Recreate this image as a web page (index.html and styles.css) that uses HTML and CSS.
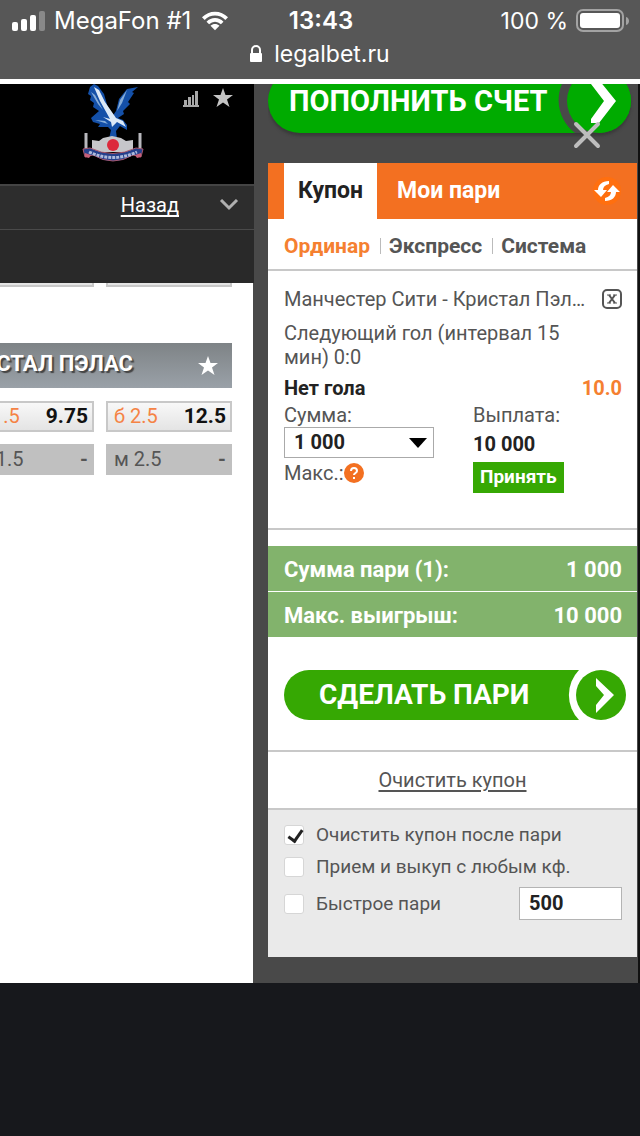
FILE: index.html
```
<!DOCTYPE html>
<html lang="ru">
  <head>
    <meta charset="utf-8" />
    <meta name="viewport" content="width=device-width, initial-scale=1.0" />
    <link rel="icon" href="data:," />
    <title>legalbet.ru</title>
    <link rel="stylesheet" href="styles.css">
  </head>
  <body>
    <header class="browser-bar">
      <div class="status">
        <div class="status-left">
          <svg class="signal" width="34" height="20" viewBox="0 0 34 20" fill="#fff">
            <rect x="0" y="11" width="6" height="9" rx="2" />
            <rect x="9" y="8" width="6" height="12" rx="2" />
            <rect x="18" y="4" width="6" height="16" rx="2" />
            <rect x="27" y="0" width="6" height="20" rx="2" opacity="0.3" />
          </svg>
          <span>MegaFon #1</span>
          <svg width="28" height="20" viewBox="0 0 30 20" fill="none" stroke="#fff" stroke-width="4">
            <path d="M2.500 7.500C9.500 0.300 20.500 0.300 27.500 7.500" />
            <path d="M7.300 12.200C11.700 7.800 18.300 7.800 22.700 12.200" />
            <path d="M15 20L10.200 15.200C13 12.600 17 12.600 19.800 15.200Z" fill="#fff" stroke="none" />
          </svg>
        </div>
        <span class="clock">13:43</span>
        <div class="status-right">
          <span>100 %</span>
          <svg width="54" height="24" viewBox="0 0 54 24">
            <rect x="1" y="1" width="46" height="21" rx="6" fill="none" stroke="#a3a3a3" stroke-width="2" />
            <rect x="4" y="4" width="40" height="15" rx="3" fill="#fff" />
            <path d="M50 8C54 9 54 15 50 16Z" fill="#a3a3a3" />
          </svg>
        </div>
      </div>
      <div class="address">
        <svg width="12" height="18" viewBox="0 0 12 18">
          <rect x="0" y="8" width="12" height="9" rx="1" fill="#fff" />
          <path d="M2 9V5A4 4 0 0 1 10 5V9" fill="none" stroke="#fff" stroke-width="2" />
        </svg>
        <span>legalbet.ru</span>
      </div>
    </header>

    <main class="page">
      <section class="match">
        <div class="team">
          <svg class="crest" width="64" height="80" viewBox="0 0 64 80">
            <path d="M13 0L9 3L7 10L10 12L9 16L13 19L12 23L18 27L10 34L12 38L19 40L17 43L27 43L30 46L28 55H36L35 47L39 42L46 46L46 41L42 36L37 34L43 30L42 27L49 20L47 18L53 9L51 8L57 3L46 5L38 15L35 27L31 33L27 24L23 10L17 2Z" fill="#1450a8" />
            <path d="M13 3L19 17L29 35L22 33L30 38L31 43L36 38L45 43L42 37L35 34L33 31L24 18L18 6Z" fill="#dce9f7" />
            <path d="M46 6L39 16L36 27L41 19ZM14 36L27 40L24 37ZM10 8L17 20L22 26L14 11Z" fill="#86add9" />
            <path d="M11 56L18 57L22 54L31 52L40 54L45 57L52 56V68H11Z" fill="#c6c6ca" />
            <path d="M5 49V67M59 49V67" stroke="#b8b8bd" stroke-width="3" />
            <circle cx="32" cy="61" r="6" fill="#dc293c" />
            <path d="M2 65L9 64Q32 75 55 64L62 65L60 73L52 71Q32 83 12 71L4 73Z" fill="#24408c" stroke="#a8586f" />
            <path d="M4 69L10 71L8 74L4 73ZM60 69L54 71L56 74L60 73Z" fill="#c65f78" />
            <path d="M8 68Q32 79 56 68" fill="none" stroke="#aebadb" stroke-width="3" stroke-dasharray="3 1" />
          </svg>
          <svg class="stats" width="16" height="16" viewBox="0 0 16 16" fill="#a8a8a8">
            <path d="M0 14H16V16H0ZM1 9H4V16H1ZM5 6H8V16H5ZM9 4H11V16H9ZM12 0H15V16H12Z" />
          </svg>
          <svg width="20" height="20" viewBox="0 0 20 20" fill="#c4c4c4">
            <path d="M10 0L12.500 7H20L14 11.500L16.500 19L10 14.500L3.500 19L6 11.500L0 7H7.500Z" />
          </svg>
        </div>
        <nav class="back-bar">
          <a href="#">Назад</a>
          <svg width="20" height="12" viewBox="0 0 20 12" fill="none" stroke="#b0b0b0" stroke-width="3">
            <path d="M2 1L10 9L18 1" />
          </svg>
        </nav>
        <div class="sub-bar"></div>

        <div class="market">
          <div class="odds odds-cut">
            <span></span>
            <span></span>
          </div>
          <div class="market-head">
            <h2>КРИСТАЛ ПЭЛАС</h2>
            <svg width="20" height="20" viewBox="0 0 20 20" fill="#fff">
              <path d="M10 0L12.500 7H20L14 11.500L16.500 19L10 14.500L3.500 19L6 11.500L0 7H7.500Z" />
            </svg>
          </div>
          <div class="odds">
            <button type="button">б 1.5 <b>9.75</b></button>
            <button type="button">б 2.5 <b>12.5</b></button>
          </div>
          <div class="odds">
            <button type="button" disabled>м 1.5 <b>-</b></button>
            <button type="button" disabled>м 2.5 <b>-</b></button>
          </div>
        </div>
      </section>

      <aside class="side">
        <div class="deposit-row">
          <button type="button" class="deposit">
            <span>ПОПОЛНИТЬ СЧЕТ</span>
            <svg width="76" height="64" viewBox="0 0 76 64">
              <path d="M18 0A41 41 0 0 0 20 64H44V0Z" fill="#494949" />
              <circle cx="44" cy="32" r="32" fill="#00ab00" />
              <path d="M36 11H44L61 32L44 54H36V50L49 32L36 15Z" fill="#fff" />
            </svg>
          </button>
          <button type="button" class="close" aria-label="Закрыть">
            <svg width="28" height="28" viewBox="0 0 28 28" stroke="#bdbdbd" stroke-width="4" stroke-linecap="round">
              <path d="M3 3L25 25M25 3L3 25" />
            </svg>
          </button>
        </div>

        <form class="coupon">
          <div class="tabs">
            <button type="button" class="tab active">Купон</button>
            <button type="button" class="tab">Мои пари</button>
            <button type="button" class="refresh" aria-label="Обновить">
              <svg width="30" height="30" viewBox="0 0 30 30">
                <circle cx="15" cy="15" r="14" fill="#ff6f0f" />
                <path d="M17 5C10 5 6 9 6 14H2L9 21L15 14H11C11 11 13 9 17 8ZM13 25C20 25 24 21 24 16H28L21 9L15 16H19C19 19 17 21 13 22Z" fill="#fff" />
              </svg>
            </button>
          </div>

          <div class="types">
            <button type="button" class="active">Ординар</button>
            <button type="button">Экспресс</button>
            <button type="button">Система</button>
          </div>

          <div class="bet">
            <div class="bet-title">
              <span class="event">Манчестер Сити - Кристал Пэлас</span>
              <button type="button" class="remove" aria-label="Удалить">
                <svg width="20" height="20" viewBox="0 0 20 20" fill="none" stroke="#555">
                  <rect x="1" y="1" width="18" height="18" rx="4" stroke-width="2" />
                  <path d="M7 6L13 14M13 6L7 14" stroke-width="2" />
                  <path d="M5 6H9M11 6H15M5 14H9M11 14H15" />
                </svg>
              </button>
            </div>
            <p class="bet-market">Следующий гол (интервал 15 мин) 0:0</p>
            <div class="bet-pick">
              <b>Нет гола</b>
              <b class="price">10.0</b>
            </div>
            <div class="bet-sums">
              <div class="stake">
                <label for="stake">Сумма:</label>
                <div class="select">
                  <select id="stake">
                    <option>1 000</option>
                  </select>
                  <svg width="18" height="10" viewBox="0 0 18 10"><path d="M0 0H18L9 10Z" /></svg>
                </div>
                <div class="max">
                  <span>Макс.:</span>
                  <svg width="20" height="20" viewBox="0 0 20 20">
                    <circle cx="10" cy="10" r="10" fill="#f37021" />
                    <path d="M7 8C7 4 13 4 13 8C13 10 10 10 10 12" fill="none" stroke="#fff" stroke-width="2" />
                    <rect x="9" y="14" width="2" height="2" fill="#fff" />
                  </svg>
                </div>
              </div>
              <div class="payout">
                <span>Выплата:</span>
                <b>10 000</b>
                <button type="button" class="accept">Принять</button>
              </div>
            </div>
          </div>

          <div class="totals">
            <div><span>Сумма пари (1):</span><span>1 000</span></div>
            <div><span>Макс. выигрыш:</span><span>10 000</span></div>
          </div>

          <div class="submit-row">
            <button type="button" class="submit">
              <span>СДЕЛАТЬ ПАРИ</span>
              <svg width="58" height="50" viewBox="0 0 58 50">
                <path d="M11 0A36 36 0 0 0 11 50H58V0Z" fill="#fff" />
                <circle cx="33" cy="25" r="25" fill="#36a803" />
                <path d="M28 8L46 25L28 43V35L36 25L28 16Z" fill="#fff" />
              </svg>
            </button>
          </div>

          <div class="clear"><a href="#">Очистить купон</a></div>

          <div class="options">
            <label><input type="checkbox" checked /> Очистить купон после пари</label>
            <label><input type="checkbox" /> Прием и выкуп с любым кф.</label>
            <div class="quick">
              <label><input type="checkbox" /> Быстрое пари</label>
              <input type="text" value="500" aria-label="Сумма быстрого пари" />
            </div>
          </div>
        </form>
      </aside>
    </main>
  </body>
</html>
```

FILE: styles.css
```
* {
  box-sizing: border-box;
}

body {
  margin: 0;
  min-height: 100vh;
  background: #17181c;
  color: #555;
  font-family: Roboto, "Liberation Sans", sans-serif;
  font-size: 20px;
  line-height: 24px;
}

button,
input,
select {
  margin: 0;
  padding: 0;
  border: 0;
  border-radius: 0;
  background: none;
  color: inherit;
  font: inherit;
}

svg {
  display: block;
  flex: none;
}

h2,
p {
  margin: 0;
}

/* browser chrome */
.browser-bar {
  height: 79px;
  padding-top: 9px;
  background: #575757;
  color: #fff;
  font-family: Inter, "Liberation Sans", sans-serif;
  font-size: 24px;
}

.status {
  display: grid;
  grid-template-columns: 1fr auto 1fr;
  padding: 0 10px 0 12px;
}

.status-left,
.status-right {
  display: flex;
  align-items: center;
  gap: 8px;
}

.status-left span {
  margin-right: 2px;
}

.status-right {
  justify-content: flex-end;
  font-size: 23px;
}

.clock {
  font-weight: 600;
}

.address {
  display: flex;
  justify-content: center;
  align-items: center;
  gap: 12px;
  margin-top: 9px;
  font-size: 23px;
}

/* page */
.page {
  display: grid;
  grid-template-columns: 254px minmax(0, 1fr);
  border-top: 5px solid #fff;
  background: #494949;
}

.match {
  display: flex;
  flex-direction: column;
  height: 899px;
  overflow: hidden;
}

.team {
  display: flex;
  align-items: flex-start;
  justify-content: flex-end;
  height: 102px;
  padding: 4px 21px 0 0;
  border-bottom: 2px solid #444;
  background: #000;
}

.crest {
  margin: -4px 38px 0 0;
}

.stats {
  margin: 3px 14px 0 0;
}

.back-bar {
  display: flex;
  align-items: center;
  justify-content: flex-end;
  gap: 40px;
  height: 44px;
  padding: 0 15px 5px 0;
  border-bottom: 1px solid #4a4a4a;
  background: #2d2d2d;
  color: #fff;
}

.back-bar a,
.clear a {
  color: inherit;
  text-underline-offset: 3px;
}

.sub-bar {
  height: 53px;
  background: #292929;
}

.market {
  flex: 1;
  margin-right: 1px;
  padding-right: 21px;
  background: #fff;
}

.odds {
  display: grid;
  grid-template-columns: 126px 126px;
  justify-content: end;
  gap: 12px;
  margin-bottom: 12px;
}

.odds button {
  display: flex;
  justify-content: space-between;
  align-items: center;
  height: 31px;
  padding: 0 4px 1px 6px;
  border: 2px solid #c8c8c8;
  background: linear-gradient(#f8f8f8, #e4e4e4);
  color: #f58345;
}

.odds b {
  color: #111;
  font-size: 21px;
}

.odds button:disabled {
  border-color: #c0c0c0;
  background: #c0c0c0;
  color: #555;
}

.odds button:disabled b {
  color: #555;
  font-size: 20px;
}

.odds-cut {
  height: 4px;
  margin-bottom: 56px;
}

.odds-cut span {
  border: 2px solid #c8c8c8;
  border-top: 0;
  background: #e4e4e4;
}

.market-head {
  display: flex;
  align-items: center;
  justify-content: flex-end;
  gap: 65px;
  height: 45px;
  margin-bottom: 13px;
  padding-right: 14px;
  background: linear-gradient(#7e8386, #9aa1a8);
  color: #fff;
}

.market-head h2 {
  padding-bottom: 4px;
  font-size: 22px;
  white-space: nowrap;
  text-shadow: 2px 2px 1px #444;
}

/* coupon column */
.side {
  padding-left: 14px;
  border-right: 2px solid #111;
}

.deposit-row {
  position: relative;
  display: flex;
  align-items: flex-end;
  height: 79px;
  padding: 0 7px 30px 0;
  overflow: hidden;
}

.deposit {
  display: flex;
  flex: 1;
  align-items: center;
  justify-content: space-between;
  height: 64px;
  padding-left: 21px;
  border-radius: 32px;
  background: #00ab00;
  box-shadow: 0 3px 3px #3a3a3a;
  color: #fff;
  font-size: 29px;
  font-weight: bold;
  white-space: nowrap;
}

.close {
  position: absolute;
  right: 37px;
  bottom: 14px;
}

.coupon {
  margin-right: 1px;
  background: #fff;
}

.tabs {
  display: flex;
  height: 56px;
  padding: 0 15px 0 16px;
  background: #f37021;
  color: #fff;
  font-size: 23px;
}

.tab {
  padding: 0 20px;
  font-weight: bold;
}

.tab.active {
  padding: 0 14px;
  background: #fff;
  color: #222;
}

.refresh {
  margin-left: auto;
}

.types {
  display: flex;
  align-items: center;
  height: 52px;
  padding: 4px 16px 0;
  border-bottom: 2px solid #c8c8c8;
}

.types button {
  font-size: 21px;
  font-weight: bold;
  line-height: 16px;
}

.types button + button {
  margin-left: 10px;
  padding-left: 8px;
  border-left: 1px solid #bbb;
}

.types button.active {
  color: #f58030;
}

.bet {
  height: 259px;
  padding: 16px 15px 0 16px;
  border-bottom: 2px solid #c8c8c8;
}

.bet-title {
  display: flex;
  align-items: center;
  gap: 12px;
  margin-bottom: 10px;
}

.event {
  flex: 1;
  overflow: hidden;
  text-overflow: ellipsis;
  white-space: nowrap;
}

.bet-market {
  padding-right: 40px;
}

.bet-pick {
  display: flex;
  justify-content: space-between;
  margin-top: 7px;
  color: #222;
}

.bet-pick .price {
  color: #f58030;
}

.bet-sums {
  display: flex;
  gap: 39px;
  margin-top: 3px;
}

.stake {
  width: 150px;
}

.select {
  position: relative;
}

.select select {
  display: block;
  width: 100%;
  height: 31px;
  padding: 0 9px 2px;
  border: 1px solid #aaa;
  appearance: none;
  background: #fff;
  color: #222;
  font-weight: bold;
}

.select svg {
  position: absolute;
  top: 11px;
  right: 7px;
}

.max {
  display: flex;
  align-items: center;
  margin-top: 3px;
}

.payout {
  display: flex;
  flex-direction: column;
  align-items: flex-start;
}

.payout b {
  margin: 5px 0 6px;
  color: #222;
}

.accept {
  height: 31px;
  padding: 0 7px 2px;
  background: #36a803;
  color: #fff;
  font-size: 19px;
  font-weight: bold;
}

.totals {
  margin-top: 16px;
  color: #fff;
  font-size: 22px;
  font-weight: bold;
}

.totals div {
  display: flex;
  align-items: center;
  justify-content: space-between;
  height: 45px;
  padding: 2px 15px 0 16px;
  background: #82b36c;
}

.totals div + div {
  margin-top: 1px;
}

.submit-row {
  padding: 33px 11px 30px 16px;
  border-bottom: 2px solid #c8c8c8;
}

.submit {
  display: flex;
  align-items: center;
  justify-content: space-between;
  width: 100%;
  height: 50px;
  padding-left: 35px;
  border-radius: 25px;
  background: #36a803;
  color: #fff;
  font-size: 28px;
  font-weight: bold;
  white-space: nowrap;
}

.clear {
  padding: 16px 0;
  border-bottom: 2px solid #c8c8c8;
  text-align: center;
}

.options {
  height: 147px;
  padding: 9px 15px 0 16px;
  background: #eaeaea;
  font-size: 19px;
}

.options label {
  display: flex;
  align-items: center;
  gap: 12px;
  height: 32px;
}

.options input[type="checkbox"] {
  width: 20px;
  height: 20px;
  border: 1px solid #d6d6d6;
  border-radius: 3px;
  appearance: none;
  background: #fff;
}

.options input[type="checkbox"]:checked::before {
  content: "";
  display: block;
  width: 6px;
  height: 12px;
  margin: 1px 0 0 6px;
  border: solid #222;
  border-width: 0 3px 3px 0;
  transform: rotate(35deg);
}

.quick {
  display: flex;
  align-items: center;
  justify-content: space-between;
  margin-top: 4px;
}

.quick input[type="text"] {
  width: 103px;
  height: 33px;
  padding: 0 9px 2px;
  border: 1px solid #b4b4b4;
  background: #fff;
  color: #222;
  font-size: 20px;
  font-weight: bold;
}
```
